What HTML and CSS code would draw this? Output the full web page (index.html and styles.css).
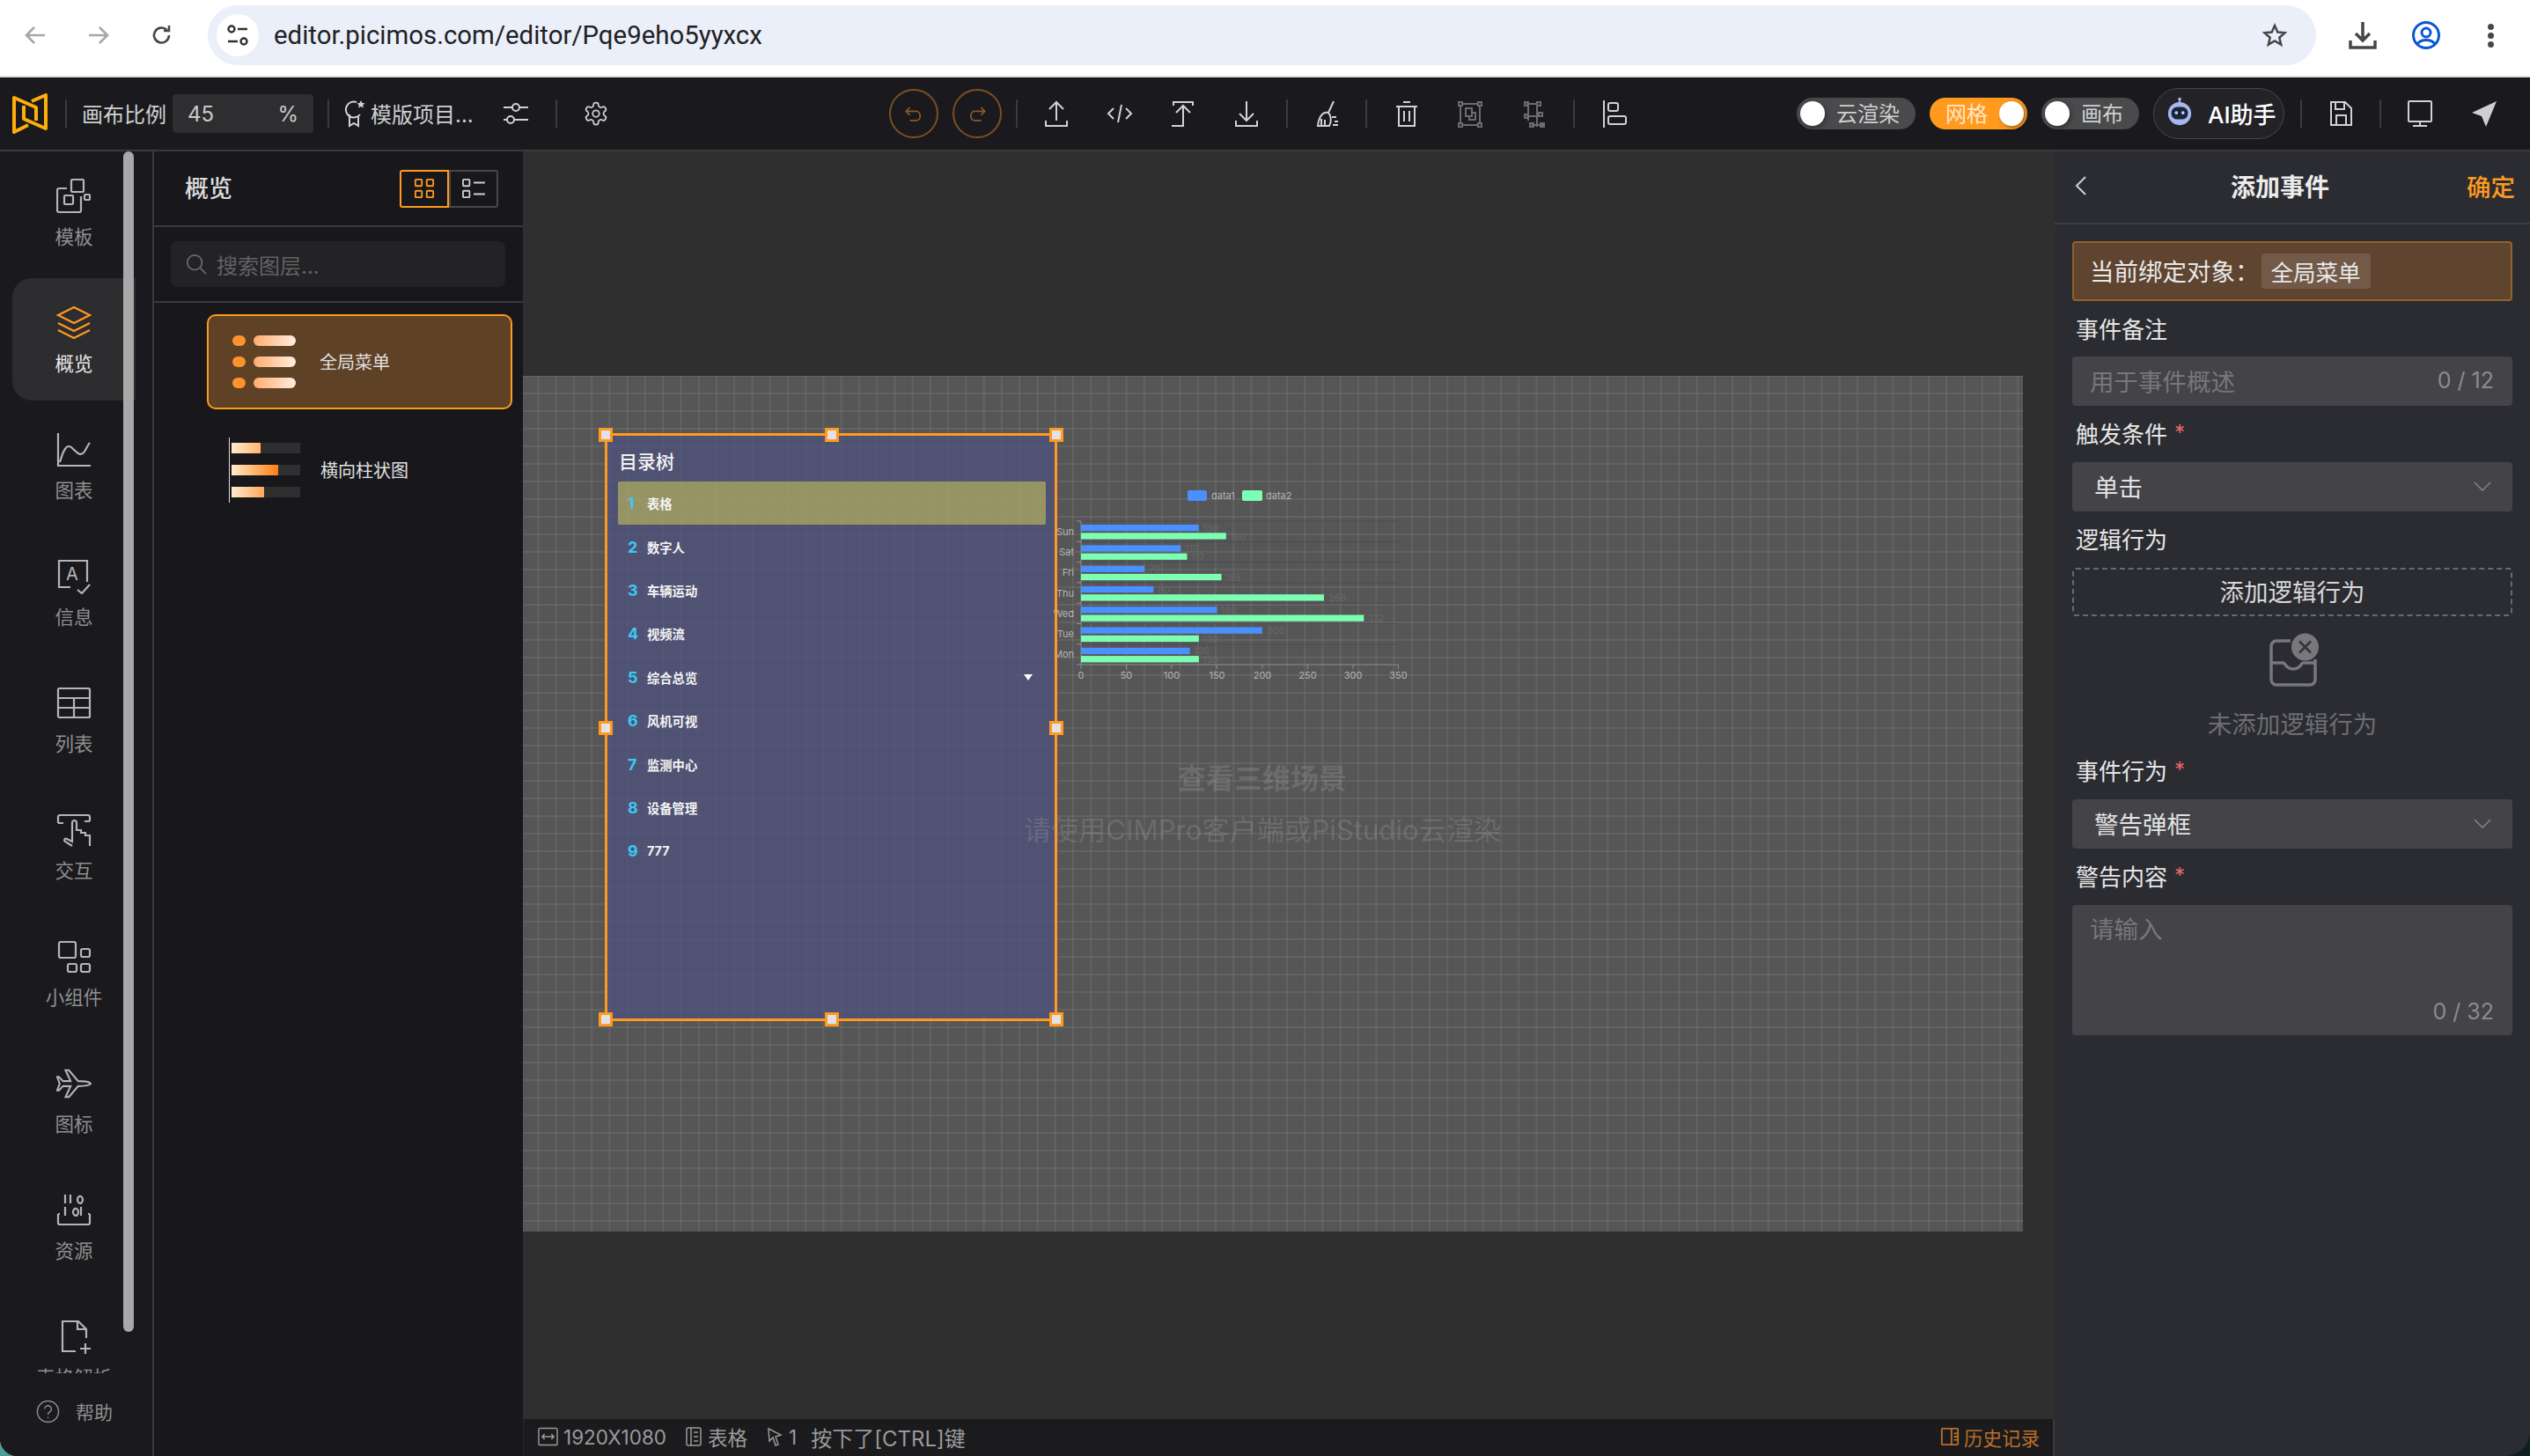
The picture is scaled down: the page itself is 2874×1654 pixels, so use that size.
FILE: index.html
```html
<!DOCTYPE html>
<html lang="zh-CN">
<head>
    <meta charset="UTF-8">
    <title>Editor</title>
    <link rel="stylesheet" href="styles.css">
</head>

<body>
    <div class="window">
        <!-- Browser bar -->
        <header class="browser">
            <svg class="b-icon dim" viewBox="0 0 24 24"><path d="M23 12H2M11 3l-9 9 9 9"/></svg>
            <svg class="b-icon dim fwd" viewBox="0 0 24 24"><path d="M1 12h21M13 3l9 9-9 9"/></svg>
            <svg class="b-icon reload" viewBox="0 0 24 24"><path d="M20 12a8.500 8.500 0 1 1-2.500-6M20 1v6h-6"/></svg>
            <div class="omnibox">
                <span class="site-btn">
                    <svg viewBox="0 0 26 26"><circle cx="6" cy="6" r="3.500"/><path d="M13 6h11M2 20h11"/><circle cx="20" cy="20" r="3.500"/></svg>
                </span>
                <span class="url">editor.picimos.com/editor/Pqe9eho5yyxcx</span>
                <svg class="star" viewBox="0 0 28 28"><path d="M14 3l3.300 7.500 8.200.8-6.200 5.400 1.900 8L14 20.500l-7.200 4.200 1.900-8-6.200-5.400 8.200-.8z"/></svg>
            </div>
            <svg class="b-icon dl" viewBox="0 0 32 32"><path d="M16 1v21M8 14l8 8 8-8M2 22v8h28v-8"/></svg>
            <svg class="b-icon profile" viewBox="0 0 32 32"><circle cx="16" cy="16" r="14.500"/><circle cx="16" cy="13" r="5"/><path d="M6 26c4-6 16-6 20 0"/></svg>
            <div class="dots"><i></i><i></i><i></i></div>
        </header>

        <!-- Editor toolbar -->
        <div class="toolbar">
            <svg class="logo" viewBox="0 0 40 48"><path d="M18 37L2 45V6l25 11v15M22 10l16-7v38L13 30V15"/></svg>
            <span class="sep first"></span>
            <span class="tb-label ratio">画布比例</span>
            <div class="zoom-box"><span>45</span><span>%</span></div>
            <span class="sep mid"></span>
            <svg class="ic award" viewBox="0 0 24 32"><path d="M14 3a9 9 0 1 0 4 14M6 17v13l5-3 5 3V19"/><path class="solid" d="M19 1l1.400 3 3.100.3-2.300 2.100.7 3.100-2.900-1.600-2.900 1.600.7-3.100-2.300-2.100 3.100-.3z"/></svg>
            <span class="tb-label project">模版项目...</span>
            <svg class="ic filter" viewBox="0 0 30 32"><path d="M1 9h10M19 9h10M1 23h4M13 23h16"/><circle cx="15" cy="9" r="4"/><circle cx="9" cy="23" r="4"/></svg>
            <span class="sep gear-sep"></span>
            <svg class="ic gear" viewBox="0 0 24 24"><path d="M12.220 2h-.44a2 2 0 0 0-2 2v.18a2 2 0 0 1-1 1.730l-.43.25a2 2 0 0 1-2 0l-.15-.08a2 2 0 0 0-2.730.73l-.22.38a2 2 0 0 0 .73 2.730l.15.1a2 2 0 0 1 1 1.720v.51a2 2 0 0 1-1 1.740l-.15.09a2 2 0 0 0-.73 2.730l.22.38a2 2 0 0 0 2.730.73l.15-.08a2 2 0 0 1 2 0l.43.25a2 2 0 0 1 1 1.730V20a2 2 0 0 0 2 2h.44a2 2 0 0 0 2-2v-.18a2 2 0 0 1 1-1.730l.43-.25a2 2 0 0 1 2 0l.15.08a2 2 0 0 0 2.730-.73l.22-.39a2 2 0 0 0-.73-2.730l-.15-.08a2 2 0 0 1-1-1.740v-.5a2 2 0 0 1 1-1.740l.15-.09a2 2 0 0 0 .73-2.730l-.22-.38a2 2 0 0 0-2.730-.73l-.15.08a2 2 0 0 1-2 0l-.43-.25a2 2 0 0 1-1-1.730V4a2 2 0 0 0-2-2z"/><circle cx="12" cy="12" r="3"/></svg>

            <div class="tb-center">
                <span class="round-btn"><svg viewBox="0 0 32 32"><path d="M11 8l-5 5 5 5M6 13h13c7 0 7 12 0 12h-8"/></svg></span>
                <span class="round-btn"><svg viewBox="0 0 32 32"><path d="M21 8l5 5-5 5M26 13H13c-7 0-7 12 0 12h8"/></svg></span>
                <span class="sep after-round"></span>
                <span class="tool"><svg viewBox="0 0 32 32"><path d="M16 3v21M8 11l8-8 8 8M4 24v6h24v-6"/></svg></span>
                <span class="tool"><svg viewBox="0 0 32 32"><path d="M9 10l-6 6 6 6M23 10l6 6-6 6M18 6l-4 20"/></svg></span>
                <span class="tool"><svg viewBox="0 0 32 32"><path d="M5 7V3h22v4M8 15l8-8 8 8M16 7v23H3"/></svg></span>
                <span class="tool"><svg viewBox="0 0 32 32"><path d="M16 2v22M8 16l8 8 8-8M4 24v6h24v-6"/></svg></span>
                <span class="sep"></span>
                <span class="tool narrow"><svg viewBox="0 0 32 32"><path d="M24 2l-6 13M18 15c-7-2-11 6-12 15h13c3-5 2-12-1-15zM10 22v8M14 23v7M22 20h5M25 25h4M23 29h6"/></svg></span>
                <span class="sep"></span>
                <span class="tool"><svg viewBox="0 0 32 32"><path d="M12 3h8M4 8h24M7 8v22h18V8M13 13v12M19 13v12"/></svg></span>
                <span class="tool off"><svg viewBox="0 0 32 32"><path d="M7 5h18M7 29h18M5 7v20M27 7v20"/><rect x="3" y="3" width="4" height="4"/><rect x="25" y="3" width="4" height="4"/><rect x="3" y="27" width="4" height="4"/><rect x="25" y="27" width="4" height="4"/><path d="M11 10h7v9h-7zM15 19v4h7v-8h-4"/></svg></span>
                <span class="tool off"><svg viewBox="0 0 32 32"><path d="M8 5h12M10 5v19M20 5v26M8 19h14M14 29h14"/><rect x="6" y="3" width="4" height="4"/><rect x="20" y="3" width="4" height="4"/><rect x="6" y="17" width="4" height="4"/><rect x="22" y="15" width="4" height="4"/><rect x="12" y="27" width="4" height="4"/><rect x="24" y="27" width="4" height="4"/></svg></span>
                <span class="sep"></span>
                <span class="tool"><svg viewBox="0 0 32 32"><path d="M4 1v31"/><rect x="9" y="4" width="11" height="9" rx="2"/><rect x="9" y="19" width="20" height="9" rx="2"/></svg></span>
            </div>

            <div class="tb-right">
                <div class="switch"><i class="knob"></i><span>云渲染</span></div>
                <div class="switch on"><span>网格</span><i class="knob"></i></div>
                <div class="switch short"><i class="knob"></i><span>画布</span></div>
                <div class="ai-btn">
                    <svg viewBox="0 0 32 40"><path class="ant" d="M16 2v6"/><circle class="ant-dot" cx="16" cy="2.500" r="2"/><circle class="ai-head" cx="16" cy="20" r="14"/><rect class="ai-face" x="6" y="12" width="20" height="15" rx="7"/><circle class="ai-eye" cx="12" cy="19" r="2"/><circle class="ai-eye" cx="20" cy="19" r="2"/></svg>
                    <span>AI助手</span>
                </div>
                <span class="sep"></span>
                <span class="tool wide"><svg viewBox="0 0 32 32"><path d="M5 3h16l7 7v19H5zM10 3v8h10V3M11 29V18h11v11"/></svg></span>
                <span class="sep"></span>
                <span class="tool wide"><svg viewBox="0 0 32 32"><rect x="3" y="2" width="26" height="23" rx="1"/><path d="M16 25v5M8 30h16"/></svg></span>
                <span class="tool send"><svg viewBox="0 0 32 32"><path class="solid" d="M30 2L2 15l11 4 5 12z"/></svg></span>
            </div>
        </div>

        <main class="body">
            <!-- Left icon rail -->
            <nav class="rail">
                <div class="rail-list">
                    <a class="rail-item">
                        <svg viewBox="0 0 40 40"><rect x="17" y="1" width="14" height="14" rx="1.500"/><path d="M12 11H3a2 2 0 0 0-2 2v23a2 2 0 0 0 2 2h23a2 2 0 0 0 2-2V20"/><rect x="9" y="19" width="10" height="10" rx="1"/><rect x="32" y="18" width="6" height="6" rx="1"/></svg>
                        <span>模板</span>
                    </a>
                    <a class="rail-item active">
                        <svg viewBox="0 0 40 40"><path d="M20 2l18 9-18 9-18-9zM2 20l18 9 18-9M2 28l18 9 18-9"/></svg>
                        <span>概览</span>
                    </a>
                    <a class="rail-item">
                        <svg viewBox="0 0 40 40"><path d="M2 1v37h37M4 34c4-14 8-22 14-16s10 10 14 4c3-5 4-8 6-10"/></svg>
                        <span>图表</span>
                    </a>
                    <a class="rail-item">
                        <svg viewBox="0 0 40 40"><path d="M16 32H3V2h32v24M24 35l5 4 9-10"/><text x="11" y="24" class="icon-letter">A</text></svg>
                        <span>信息</span>
                    </a>
                    <a class="rail-item">
                        <svg viewBox="0 0 40 40"><rect x="2" y="3" width="36" height="33" rx="1.500"/><path d="M2 14h36M2 25h36M20 14v22"/></svg>
                        <span>列表</span>
                    </a>
                    <a class="rail-item">
                        <svg viewBox="0 0 40 40"><path d="M2 12V5a2 2 0 0 1 2-2h32a2 2 0 0 1 2 2v5M2 12h6M32 10h6M18 38l-8-5c-2-2 0-4 2-3l6 3V12c0-4 5-4 5 0v8h5v3h5v3h5v12"/></svg>
                        <span>交互</span>
                    </a>
                    <a class="rail-item">
                        <svg viewBox="0 0 40 40"><rect x="3" y="3" width="19" height="18" rx="2"/><rect x="13" y="28" width="10" height="9" rx="2"/><rect x="28" y="11" width="10" height="9" rx="2"/><rect x="28" y="28" width="10" height="9" rx="2"/></svg>
                        <span>小组件</span>
                    </a>
                    <a class="rail-item">
                        <svg viewBox="0 0 42 36"><path d="M41 18c-2-3-10-3-15-3L15 2h-4l6 13H8L3 10H1l3 8-3 8h2l5-5h9l-6 13h4l11-13c5 0 13 0 15-3z"/></svg>
                        <span>图标</span>
                    </a>
                    <a class="rail-item">
                        <svg viewBox="0 0 40 40"><path d="M10 2v10M16 2v10M24 8a3 4 0 1 0 0-.1zM10 16v10M28 16v10M19 22a3 4 0 1 0 0-.1zM2 24v10a2 2 0 0 0 2 2h32a2 2 0 0 0 2-2V24M2 24h2M36 24h2"/></svg>
                        <span>资源</span>
                    </a>
                    <a class="rail-item">
                        <svg viewBox="0 0 40 40"><path d="M22 36H7V2h18l9 9v10M24 2v9h10M27 33h12M33 27v12"/></svg>
                        <span>表格解析</span>
                    </a>
                    <div class="rail-scroll"></div>
                </div>
                <div class="help">
                    <svg viewBox="0 0 28 28"><circle cx="14" cy="14" r="12.500"/><path d="M10 11a4 4 0 1 1 6 3.500c-1.500.8-2 1.500-2 3M14 20.500v1.500"/></svg>
                    <span>帮助</span>
                </div>
            </nav>

            <!-- Layer panel -->
            <aside class="layers">
                <div class="layers-head">
                    <span class="layers-title">概览</span>
                    <div class="view-toggle">
                        <span class="view-btn current"><svg viewBox="0 0 26 26"><rect x="2" y="2" width="8" height="8" rx="1"/><rect x="16" y="2" width="8" height="8" rx="1"/><rect x="2" y="16" width="8" height="8" rx="1"/><rect x="16" y="16" width="8" height="8" rx="1"/></svg></span>
                        <span class="view-btn"><svg viewBox="0 0 30 26"><rect x="2" y="2" width="8" height="8" rx="1"/><rect x="2" y="16" width="8" height="8" rx="1"/><path d="M15 6h14M15 20h14"/></svg></span>
                    </div>
                </div>
                <div class="layers-search">
                    <div class="search-box">
                        <svg viewBox="0 0 26 26"><circle cx="11" cy="11" r="9"/><path d="M18 18l7 7"/></svg>
                        <span>搜索图层...</span>
                    </div>
                </div>
                <div class="layer-list">
                    <div class="layer-card selected">
                        <div class="thumb-menu">
                            <i></i><b></b><i></i><b></b><i></i><b></b>
                        </div>
                        <span>全局菜单</span>
                    </div>
                    <div class="layer-card">
                        <div class="thumb-bars">
                            <div class="track"><i class="fill-a"></i></div>
                            <div class="track"><i class="fill-b"></i></div>
                            <div class="track"><i class="fill-c"></i></div>
                        </div>
                        <span>横向柱状图</span>
                    </div>
                </div>
            </aside>

            <!-- Canvas -->
            <section class="canvas">
                <div class="stage">
                    <div class="artboard">
                        <div class="menu-widget">
                            <div class="menu-title">目录树</div>
                            <div class="menu-row current"><em>1</em><span>表格</span></div>
                            <div class="menu-row"><em>2</em><span>数字人</span></div>
                            <div class="menu-row"><em>3</em><span>车辆运动</span></div>
                            <div class="menu-row"><em>4</em><span>视频流</span></div>
                            <div class="menu-row"><em>5</em><span>综合总览</span><u class="caret"></u></div>
                            <div class="menu-row"><em>6</em><span>风机可视</span></div>
                            <div class="menu-row"><em>7</em><span>监测中心</span></div>
                            <div class="menu-row"><em>8</em><span>设备管理</span></div>
                            <div class="menu-row"><em>9</em><span>777</span></div>
                        </div>

                        <svg class="bar-chart" viewBox="0 0 420 230">
                            <rect class="c1" x="149" y="7" width="22" height="12" rx="2"/>
                            <text class="lg" x="176" y="17">data1</text>
                            <rect class="c2" x="211" y="7" width="23" height="12" rx="2"/>
                            <text class="lg" x="238" y="17">data2</text>

                            <path class="split" d="M28 42H388M28 65.300H388M28 88.600H388M28 111.900H388M28 135.200H388M28 158.500H388M28 181.800H388"/>
                            <path class="axis" d="M28 42V205H388.400M23 42h5M23 65.300h5M23 88.600h5M23 111.900h5M23 135.200h5M23 158.500h5M23 181.800h5M23 205h5M28 205v5M79.500 205v5M131 205v5M182.500 205v5M234 205v5M285.500 205v5M337 205v5M388.400 205v5"/>

                            <rect class="c1" x="28" y="46" width="133.900" height="7.300"/><rect class="c2" x="28" y="55.300" width="164.800" height="7.300"/>
                            <rect class="c1" x="28" y="69.300" width="113.300" height="7.300"/><rect class="c2" x="28" y="78.600" width="120.500" height="7.300"/>
                            <rect class="c1" x="28" y="92.600" width="72.100" height="7.300"/><rect class="c2" x="28" y="101.900" width="159.600" height="7.300"/>
                            <rect class="c1" x="28" y="115.900" width="82.400" height="7.300"/><rect class="c2" x="28" y="125.200" width="276" height="7.300"/>
                            <rect class="c1" x="28" y="139.200" width="154.500" height="7.300"/><rect class="c2" x="28" y="148.500" width="321.300" height="7.300"/>
                            <rect class="c1" x="28" y="162.500" width="205.900" height="7.300"/><rect class="c2" x="28" y="171.800" width="133.900" height="7.300"/>
                            <rect class="c1" x="28" y="185.800" width="123.600" height="7.300"/><rect class="c2" x="28" y="195.100" width="133.900" height="7.300"/>

                            <text class="val" x="166" y="54">130</text><text class="val" x="197" y="64">160</text>
                            <text class="val" x="146" y="77">110</text><text class="val" x="153" y="87">117</text>
                            <text class="val" x="105" y="100">70</text><text class="val" x="192" y="110">155</text>
                            <text class="val" x="115" y="124">80</text><text class="val" x="309" y="133">268</text>
                            <text class="val" x="187" y="147">150</text><text class="val" x="354" y="156">312</text>
                            <text class="val" x="239" y="170">200</text><text class="val" x="166" y="180">130</text>
                            <text class="val" x="156" y="193">120</text><text class="val" x="166" y="203">130</text>

                            <text class="yl" x="20" y="58">Sun</text><text class="yl" x="20" y="81">Sat</text>
                            <text class="yl" x="20" y="104">Fri</text><text class="yl" x="20" y="128">Thu</text>
                            <text class="yl" x="20" y="151">Wed</text><text class="yl" x="20" y="174">Tue</text>
                            <text class="yl" x="20" y="197">Mon</text>

                            <text class="xl" x="28" y="221">0</text><text class="xl" x="79.500" y="221">50</text>
                            <text class="xl" x="131" y="221">100</text><text class="xl" x="182.500" y="221">150</text>
                            <text class="xl" x="234" y="221">200</text><text class="xl" x="285.500" y="221">250</text>
                            <text class="xl" x="337" y="221">300</text><text class="xl" x="388.400" y="221">350</text>
                        </svg>

                        <div class="scene-tip">
                            <strong>查看三维场景</strong>
                            <span>请使用CIMPro客户端或PiStudio云渲染</span>
                        </div>

                        <div class="selection">
                            <i class="h tl"></i><i class="h tc"></i><i class="h tr"></i>
                            <i class="h ml"></i><i class="h mr"></i>
                            <i class="h bl"></i><i class="h bc"></i><i class="h br"></i>
                        </div>
                    </div>
                </div>

                <footer class="statusbar">
                    <svg class="st-icon" viewBox="0 0 24 24"><rect x="1" y="2" width="22" height="20" rx="2"/><path d="M5 12h14M8 9l-3 3 3 3M16 9l3 3-3 3"/></svg>
                    <span class="st-text">1920X1080</span>
                    <svg class="st-icon gap-l" viewBox="0 0 20 24"><rect x="2" y="2" width="16" height="20" rx="2"/><path d="M7 2v20M10 7h5M10 12h5M10 17h5"/></svg>
                    <span class="st-text">表格</span>
                    <svg class="st-icon gap-l" viewBox="0 0 20 24"><path d="M3 3l14 7-6 2 3 9-3 1-3-9-4 4z"/></svg>
                    <span class="st-text">1</span>
                    <span class="st-text gap-msg">按下了[CTRL]键</span>
                    <div class="history">
                        <svg viewBox="0 0 24 24"><rect x="2" y="2" width="20" height="20" rx="1"/><path d="M14 2v20M17 8h5M17 12h5M17 16h5"/></svg>
                        <span>历史记录</span>
                    </div>
                </footer>
            </section>

            <!-- Event panel -->
            <aside class="event-panel">
                <div class="ep-head">
                    <svg class="back" viewBox="0 0 14 24"><path d="M12 2L2 12l10 10"/></svg>
                    <span class="ep-title">添加事件</span>
                    <span class="ep-ok">确定</span>
                </div>
                <div class="ep-body">
                    <div class="bound"><span>当前绑定对象：</span><span class="bound-tag">全局菜单</span></div>

                    <label class="field-label first">事件备注</label>
                    <div class="input"><span class="ph">用于事件概述</span><span class="count">0 / 12</span></div>

                    <label class="field-label">触发条件<i>*</i></label>
                    <div class="select"><span>单击</span><svg viewBox="0 0 22 12"><path d="M1 1l10 10L21 1"/></svg></div>

                    <label class="field-label">逻辑行为</label>
                    <div class="dash-btn">添加逻辑行为</div>

                    <div class="empty">
                        <svg viewBox="0 0 56 61"><path d="M24 9H8a6 6 0 0 0-6 6v38a6 6 0 0 0 6 6h38a6 6 0 0 0 6-6V30M2 34h14c2 0 2 7 11 7s9-7 11-7h14"/><circle class="x-bg" cx="40.500" cy="16" r="15.500"/><path class="x-mark" d="M34 9.500l13 13M47 9.500l-13 13"/></svg>
                        <span>未添加逻辑行为</span>
                    </div>

                    <label class="field-label short">事件行为<i>*</i></label>
                    <div class="select"><span>警告弹框</span><svg viewBox="0 0 22 12"><path d="M1 1l10 10L21 1"/></svg></div>

                    <label class="field-label">警告内容<i>*</i></label>
                    <div class="textarea"><span class="ph">请输入</span><span class="count">0 / 32</span></div>
                </div>
            </aside>
        </main>
    </div>
</body>
</html>
```

FILE: styles.css
```css
/* General */
* {
    box-sizing: border-box;
}

html, body {
    margin: 0;
    height: 100%;
    overflow: hidden;
}

body {
    font-family: Inter, "Noto Sans CJK SC", sans-serif;
    background: linear-gradient(90deg, #4f9d96 0, #2b5f5c 5%, #0f1f20 95%);
    color: #ddd;
}

svg {
    display: block;
    fill: none;
    stroke: currentColor;
    stroke-width: 2;
}

.window {
    width: 2874px;
    height: 1654px;
    display: flex;
    flex-direction: column;
    border-radius: 0 0 28px 20px;
    overflow: hidden;
    background: #18181c;
}

/* Browser bar */
.browser {
    height: 88px;
    flex: none;
    display: flex;
    align-items: center;
    background: #fff;
    border-bottom: 2px solid #e0e0e0;
    padding-bottom: 6px;
    padding-left: 28px;
}

.b-icon {
    width: 24px;
    height: 24px;
    stroke-width: 2.600;
    color: #474747;
}

.b-icon.dim {
    color: #a6a6a6;
}

.b-icon.fwd {
    margin-left: 48px;
}

.b-icon.reload {
    margin-left: 48px;
}

.omnibox {
    width: 2395px;
    height: 68px;
    margin-left: 40px;
    border-radius: 34px;
    background: #ebeff9;
    display: flex;
    align-items: center;
    padding-left: 10px;
    padding-right: 33px;
}

.site-btn {
    width: 48px;
    height: 48px;
    border-radius: 50%;
    background: #fff;
    display: flex;
    align-items: center;
    justify-content: center;
    color: #333;
}

.site-btn svg {
    width: 26px;
    height: 26px;
    stroke-width: 2.400;
}

.url {
    margin-left: 17px;
    font-family: Roboto, sans-serif;
    font-size: 29.400px;
    color: #202124;
}

.star {
    width: 28px;
    height: 28px;
    margin-left: auto;
    color: #474747;
    stroke-width: 2.500;
}

.b-icon.dl {
    width: 32px;
    height: 32px;
    margin-left: 37px;
    stroke-width: 3.500;
}

.b-icon.profile {
    width: 32px;
    height: 32px;
    margin-left: 40px;
    color: #0b57d0;
    stroke-width: 3;
}

.dots {
    margin-left: 54px;
    display: flex;
    flex-direction: column;
    gap: 3px;
}

.dots i {
    width: 7px;
    height: 7px;
    border-radius: 50%;
    background: #474747;
}

/* Toolbar */
.toolbar {
    height: 84px;
    flex: none;
    display: flex;
    align-items: center;
    background: #1a1a1e;
    border-bottom: 2px solid #3a3a3c;
    padding-left: 14px;
    padding-right: 23px;
    color: #d2d2d2;
}

.logo {
    width: 40px;
    height: 48px;
    color: #ffae0a;
    stroke-width: 4;
    stroke-linejoin: round;
}

.sep {
    width: 2px;
    height: 32px;
    flex: none;
    background: #3b3b3d;
    margin: 0 9px 0 9px;
}

.sep.first {
    margin: 0 0 0 20px;
}

.tb-label {
    font-size: 24px;
    color: #d0d0d0;
    white-space: nowrap;
    padding-bottom: 2px;
}

.tb-label.ratio {
    margin-left: 17px;
}

.zoom-box {
    width: 160px;
    height: 44px;
    margin-left: 7px;
    border-radius: 4px;
    background: #2e2e30;
    display: flex;
    align-items: center;
    justify-content: space-between;
    padding: 0 17px;
    font-size: 24px;
    color: #c9c9c9;
}

.sep.mid {
    margin: 0 0 0 16px;
}

.ic {
    flex: none;
}

.ic .solid {
    fill: currentColor;
    stroke: none;
}

.award {
    width: 24px;
    height: 32px;
    margin-left: 17px;
}

.tb-label.project {
    margin-left: 6px;
}

.filter {
    width: 30px;
    height: 32px;
    margin-left: 33px;
}

.sep.gear-sep {
    margin: 0 0 0 30px;
}

.gear {
    width: 30px;
    height: 30px;
    margin-left: 29px;
    stroke-width: 1.400;
}

.tb-center {
    display: flex;
    align-items: center;
    margin-left: 318px;
}

.round-btn {
    width: 56px;
    height: 56px;
    border: 2px solid #7a5024;
    border-radius: 50%;
    margin-right: 16px;
    display: flex;
    align-items: center;
    justify-content: center;
    color: #8a5a28;
}

.round-btn svg {
    width: 28px;
    height: 28px;
}

.sep.after-round {
    margin: 0 8px 0 0;
}

.tool {
    width: 72px;
    display: flex;
    justify-content: center;
}

.tool.narrow {
    width: 70px;
}

.tool svg {
    width: 32px;
    height: 32px;
}

.tool.off {
    color: #6c6c6c;
}

.tool .solid {
    fill: #cfcfcf;
    stroke: none;
}

.tb-right {
    margin-left: auto;
    display: flex;
    align-items: center;
}

.switch {
    width: 135px;
    height: 36px;
    border-radius: 18px;
    background: #4a4a4c;
    display: flex;
    align-items: center;
    padding: 0 4px;
    margin-right: 16px;
    font-size: 24px;
    color: #cfcfcf;
}

.switch span {
    margin-left: 13px;
    padding-bottom: 3px;
}

.switch.on {
    width: 111px;
    background: #ff9a1f;
    color: #ffe6c8;
    justify-content: space-between;
}

.switch.on span {
    margin-left: 14px;
}

.switch.short {
    width: 111px;
}

.knob {
    width: 28px;
    height: 28px;
    border-radius: 50%;
    background: #fff;
    box-shadow: 2px 2px 5px rgba(0, 0, 0, 0.35);
    flex: none;
}

.ai-btn {
    width: 149px;
    height: 58px;
    border: 1px solid #48484c;
    border-radius: 29px;
    background: #232327;
    display: flex;
    align-items: center;
    padding-left: 14px;
    font-size: 26px;
    color: #fff;
    font-weight: 500;
}

.ai-btn svg {
    width: 30px;
    height: 38px;
    stroke: none;
}

.ai-btn span {
    margin-left: 17px;
    white-space: nowrap;
    padding-bottom: 2px;
}

.ant {
    stroke: #a9b6d8;
    stroke-width: 2;
}

.ant-dot {
    fill: #a9b6d8;
}

.ai-head {
    fill: #a8b6ef;
}

.ai-face {
    fill: #1c2336;
}

.ai-eye {
    fill: #bcd4ff;
}

.tb-right .sep {
    margin: 0;
}

.tb-right .ai-btn + .sep {
    margin-left: 18px;
}

.tool.wide {
    width: 88px;
}

.tool.send {
    width: 58px;
}

/* Main area */
.body {
    flex: 1;
    display: flex;
    min-height: 0;
}

/* Rail */
.rail {
    width: 175px;
    flex: none;
    background: #1a1a1e;
    border-right: 2px solid #3a3a3c;
    display: flex;
    flex-direction: column;
}

.rail-list {
    height: 1388px;
    overflow: hidden;
    position: relative;
    display: flex;
    flex-direction: column;
    gap: 5px;
}

.rail-item {
    height: 139px;
    width: 140px;
    margin-left: 14px;
    flex: none;
    padding-top: 31px;
    border-radius: 22px 0 0 22px;
    display: flex;
    flex-direction: column;
    align-items: center;
    color: #b5b5b5;
    font-size: 21.500px;
}

.rail-item svg {
    width: 40px;
    height: 40px;
    margin-bottom: 12px;
    stroke-width: 2.200;
    flex: none;
}

.rail-item span {
    line-height: 28px;
    color: #8f8f8f;
    white-space: nowrap;
}

.rail-item.active {
    background: #2d2d2f;
}

.rail-item.active svg {
    color: #ff9a1f;
}

.rail-item.active span {
    color: #e8e8e8;
}

.icon-letter {
    font-size: 20px;
    fill: #b5b5b5;
    stroke: none;
}

.rail-scroll {
    position: absolute;
    left: 140px;
    top: 0;
    width: 12px;
    height: 1341px;
    border-radius: 6px;
    background: #a8a8a8;
}

.help {
    display: flex;
    align-items: center;
    padding-left: 41px;
    padding-top: 28px;
    font-size: 21px;
    color: #8f8f8f;
}

.help svg {
    width: 27px;
    height: 27px;
    stroke-width: 1.500;
}

.help span {
    margin-left: 18px;
}

/* Layer panel */
.layers {
    width: 419px;
    flex: none;
    background: #18181c;
    display: flex;
    flex-direction: column;
}

.layers-head {
    height: 86px;
    flex: none;
    display: flex;
    align-items: center;
    justify-content: space-between;
    padding: 0 28px 0 35px;
    border-bottom: 2px solid #3a3a3c;
}

.layers-title {
    font-size: 27px;
    color: #dcdcdc;
    font-weight: 500;
    padding-bottom: 3px;
}

.view-toggle {
    display: flex;
}

.view-btn {
    width: 56px;
    height: 43px;
    border: 2px solid #48484a;
    border-radius: 0 3px 3px 0;
    display: flex;
    align-items: center;
    justify-content: center;
    color: #cfcfcf;
}

.view-btn.current {
    border-color: #ff9a1f;
    border-radius: 3px 0 0 3px;
    color: #ff9a1f;
}

.view-btn svg {
    height: 24px;
    width: 24px;
}

.view-btn:last-child svg {
    width: 30px;
}

.layers-search {
    height: 86px;
    flex: none;
    padding: 16px 20px 0 19px;
    border-bottom: 2px solid #3a3a3c;
}

.search-box {
    height: 52px;
    border-radius: 8px;
    background: #232325;
    display: flex;
    align-items: center;
    padding-left: 17px;
    font-size: 24px;
    color: #626264;
}

.search-box svg {
    width: 24px;
    height: 24px;
    stroke-width: 1.800;
    color: #6e6e70;
}

.search-box span {
    margin-left: 11px;
}

.layer-list {
    padding: 13px 12px 0 60px;
    display: flex;
    flex-direction: column;
    gap: 15px;
}

.layer-card {
    height: 108px;
    border: 2px solid transparent;
    border-radius: 10px;
    display: flex;
    align-items: center;
    padding-left: 23px;
    font-size: 20px;
    color: #e0e0e0;
}

.layer-card.selected {
    background: #5f4126;
    border-color: #ff9a1f;
}

.layer-card span {
    margin-left: 27px;
    padding-bottom: 2px;
}

.thumb-menu {
    width: 72px;
    display: grid;
    grid-template-columns: 15px 48px;
    column-gap: 9px;
    row-gap: 12px;
    margin-left: 4px;
}

.thumb-menu i {
    height: 12px;
    border-radius: 6px;
    background: #ff912f;
}

.thumb-menu b {
    height: 12px;
    border-radius: 6px;
    background: linear-gradient(90deg, #ffab6f, #ffeedf);
}

.thumb-bars {
    width: 81px;
    height: 74px;
    border-left: 1px solid #dcdcdc;
    display: flex;
    flex-direction: column;
    justify-content: space-between;
    padding: 6px 0 6px 2px;
}

.layer-card:not(.selected) .thumb-bars + span {
    margin-left: 23px;
}

.track {
    height: 12px;
    background: #2f2f2f;
}

.track i {
    display: block;
    height: 12px;
}

.fill-a {
    width: 33px;
    background: linear-gradient(90deg, #ffeccb, #ffb56f);
}

.fill-b {
    width: 53px;
    background: linear-gradient(90deg, #ffeccb, #ff7d12);
}

.fill-c {
    width: 37px;
    background: linear-gradient(90deg, #ffeccb, #ffa75c);
}

/* Canvas */
.canvas {
    flex: 1;
    min-width: 0;
    display: flex;
    flex-direction: column;
    background: #2f2f2f;
}

.stage {
    flex: 1;
    position: relative;
    overflow: hidden;
}

.artboard {
    position: absolute;
    left: -24px;
    top: 255px;
    width: 1728px;
    height: 972px;
    background-color: #565656;
    background-image:
        linear-gradient(90deg, rgba(255, 255, 255, 0.07) 2px, transparent 2px),
        linear-gradient(rgba(255, 255, 255, 0.07) 2px, transparent 2px);
    background-size: 20.250px 20px;
    background-position: 0 -1px;
}

.menu-widget {
    position: absolute;
    left: 118px;
    top: 66px;
    width: 514px;
    height: 666px;
    background: rgba(79, 81, 126, 0.75);
    padding: 0 14px;
}

.menu-title {
    height: 54px;
    line-height: 64px;
    padding-left: 1px;
    font-size: 21px;
    font-weight: 500;
    color: #f2f2f2;
}

.menu-row {
    height: 49.400px;
    display: flex;
    align-items: center;
    padding-left: 11px;
    font-size: 14.300px;
    font-weight: 700;
    color: #f4f4f4;
}

.menu-row em {
    width: 22px;
    font-style: normal;
    font-size: 18px;
    color: #3cc8f5;
}

.menu-row.current {
    background: rgba(255, 247, 78, 0.4);
    border-radius: 2px;
}

.caret {
    margin-left: auto;
    margin-right: 15px;
    border-left: 5px solid transparent;
    border-right: 5px solid transparent;
    border-top: 7px solid #fff;
}

.bar-chart {
    position: absolute;
    left: 630px;
    top: 123px;
    width: 420px;
    height: 230px;
    overflow: visible;
    stroke: none;
    font-family: Inter, sans-serif;
    font-size: 11px;
}

.c1 {
    fill: #4a90ff;
}

.c2 {
    fill: #7cffb2;
}

.bar-chart .split {
    stroke: #4c4c5a;
    stroke-width: 1;
}

.bar-chart .axis {
    stroke: #8e8e96;
    stroke-width: 1;
}

.lg {
    fill: #b4b4bc;
}

.val {
    fill: #676767;
}

.yl {
    fill: #b4b4b4;
    text-anchor: end;
}

.xl {
    fill: #b4b4b4;
    text-anchor: middle;
}

.scene-tip {
    position: absolute;
    left: 0;
    right: 0;
    top: 436px;
    display: flex;
    flex-direction: column;
    align-items: center;
    color: rgba(255, 255, 255, 0.13);
    font-size: 31.200px;
    line-height: 44px;
}

.scene-tip strong {
    font-size: 32px;
    font-weight: 700;
    margin-bottom: 14px;
}

.selection {
    position: absolute;
    left: 117px;
    top: 65px;
    width: 514px;
    height: 668px;
    border: 3px solid #ff9a1f;
}

.h {
    position: absolute;
    width: 16px;
    height: 16px;
    border: 3px solid #ff9a1f;
    background: #e2e2e6;
}

.tl { left: -10px; top: -9px; }
.tc { left: 247px; top: -9px; }
.tr { right: -10px; top: -9px; }
.ml { left: -10px; top: 324px; }
.mr { right: -10px; top: 324px; }
.bl { left: -10px; bottom: -9px; }
.bc { left: 247px; bottom: -9px; }
.br { right: -10px; bottom: -9px; }

/* Status bar */
.statusbar {
    height: 42px;
    flex: none;
    display: flex;
    align-items: center;
    background: #1b1b1d;
    border-right: 2px solid #3a3a3c;
    border-left: 1px solid #2a2a2c;
    padding-left: 16px;
    padding-bottom: 2px;
    font-size: 22.500px;
    color: #9a9a9a;
}

.st-icon {
    width: 23px;
    height: 24px;
    flex: none;
    stroke-width: 1.500;
}

.st-icon.gap-l {
    width: 20px;
    margin-left: 21px;
}

.st-text {
    margin-left: 6px;
    white-space: nowrap;
}

.st-text.gap-msg {
    margin-left: 16px;
    font-size: 24px;
}

.history {
    margin-left: auto;
    padding-right: 15px;
    display: flex;
    align-items: center;
    color: #b8702a;
    font-size: 21.500px;
}

.history svg {
    width: 22px;
    height: 22px;
    margin-right: 5px;
}

/* Event panel */
.event-panel {
    width: 540px;
    flex: none;
    background: #2b2c31;
    display: flex;
    flex-direction: column;
}

.ep-head {
    height: 83px;
    flex: none;
    display: flex;
    align-items: center;
    position: relative;
    border-bottom: 2px solid #3d3e43;
    padding-bottom: 4px;
}

.back {
    width: 14px;
    height: 24px;
    margin-left: 23px;
    color: #d0d0d0;
    stroke-width: 2;
}

.ep-title {
    position: absolute;
    left: 0;
    right: 28px;
    text-align: center;
    font-size: 28px;
    font-weight: 700;
    color: #ececec;
}

.ep-ok {
    margin-left: auto;
    margin-right: 17px;
    font-size: 27.500px;
    font-weight: 500;
    color: #ff9a1f;
}

.ep-body {
    padding: 19px 20px 0;
}

.bound {
    height: 68px;
    display: flex;
    align-items: center;
    padding-left: 18px;
    background: #5f4430;
    border: 2px solid #96602a;
    border-radius: 4px;
    font-size: 27.500px;
    color: #e8e8e8;
}

.bound > span:first-child {
    padding-bottom: 3px;
}

.bound-tag {
    height: 40px;
    margin-left: 2px;
    padding: 0 11px 2px;
    display: flex;
    align-items: center;
    border-radius: 4px;
    background: #735a48;
    font-size: 25.500px;
}

.field-label {
    height: 64px;
    display: flex;
    align-items: center;
    padding-left: 4px;
    padding-bottom: 3px;
    font-size: 26px;
    color: #e6e6e6;
}

.field-label.first {
    height: 63px;
}

.field-label i {
    margin-left: 8px;
    font-style: normal;
    font-size: 24px;
    color: #e86a6a;
    line-height: 1;
}

.input,
.select {
    height: 56px;
    display: flex;
    align-items: center;
    justify-content: space-between;
    border-radius: 4px;
    background: #434348;
    padding: 0 21px 2px 20px;
    font-size: 27.500px;
    color: #e2e2e2;
}

.select {
    padding-left: 25px;
    padding-right: 24px;
}

.select svg {
    width: 20px;
    height: 11px;
    color: #88888c;
    stroke-width: 1.500;
}

.ph {
    color: #77777b;
}

.count {
    font-size: 25px;
    color: #8b8b8f;
    white-space: nowrap;
}

.dash-btn {
    height: 55px;
    display: flex;
    align-items: center;
    justify-content: center;
    border: 2px dashed #6a6a6e;
    border-radius: 4px;
    padding-bottom: 3px;
    font-size: 27.500px;
    color: #d8d8d8;
}

.empty {
    height: 144px;
    padding-top: 19px;
    display: flex;
    flex-direction: column;
    align-items: center;
    font-size: 27.500px;
    color: #6e6e72;
}

.empty svg {
    width: 56px;
    height: 61px;
    color: #77777c;
    stroke-width: 3.500;
    flex: none;
    margin-left: 3px;
}

.empty .x-bg {
    fill: #77777c;
    stroke: none;
}

.empty .x-mark {
    color: #34353a;
    stroke-width: 2.500;
}

.empty span {
    margin-top: 27px;
    line-height: 32px;
}

.textarea {
    height: 148px;
    display: flex;
    flex-direction: column;
    justify-content: space-between;
    border-radius: 4px;
    background: #434348;
    padding: 9px 21px 8px 20px;
    font-size: 27.500px;
    line-height: 38px;
}

.textarea .count {
    align-self: flex-end;
}
```
